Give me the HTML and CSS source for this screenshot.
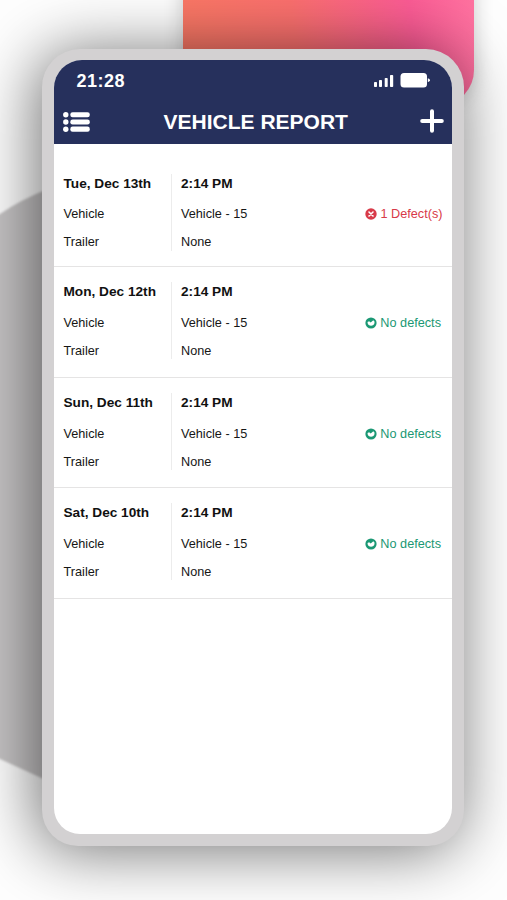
FILE: index.html
```html
<!DOCTYPE html>
<html lang="en">
<head>
<meta charset="utf-8">
<title>Vehicle Report</title>
<link rel="stylesheet" href="styles.css">
</head>
<body>
<svg class="backdrop" viewBox="0 0 507 900" aria-hidden="true">
  <defs>
    <linearGradient id="warm" x1="183" y1="45" x2="474" y2="0" gradientUnits="userSpaceOnUse">
      <stop offset="0" stop-color="#fb7865"/><stop offset=".38" stop-color="#fb706e"/><stop offset=".78" stop-color="#fc5c95"/><stop offset="1" stop-color="#ff72a0"/>
    </linearGradient>
    <filter id="soft"><feGaussianBlur stdDeviation="1.2"/></filter>
    <filter id="haze" x="-30%" y="-30%" width="160%" height="160%"><feGaussianBlur stdDeviation="10"/></filter>
  </defs>
  <rect x="183" y="-40" width="291" height="141" rx="30" fill="#000" opacity=".2" filter="url(#haze)"/>
  <path d="M-5 217 L0 214 Q20 200 50 188 V782 L0 759 L-5 756Z" fill="#c6c4c5" filter="url(#soft)"/>
  <path d="M183 0H474V70Q474 84 464 95L440 104H183Z" fill="url(#warm)"/>
</svg>
<main class="phone">
  <div class="screen">
    <header class="header">
      <div class="status">
        <span class="clock">21:28</span>
        <svg class="signals" viewBox="0 0 56 16" width="56" height="16" fill="#fff" aria-hidden="true">
          <rect x="0" y="10" width="3" height="5" rx=".8"/><rect x="5" y="8" width="3" height="7" rx=".8"/><rect x="10.7" y="6" width="3" height="9" rx=".8"/><rect x="16" y="3" width="3.2" height="12" rx=".8"/>
          <rect x="26.5" y="1" width="26.5" height="14.5" rx="3.5"/><path d="M53.8 6.3Q56 7 56 8.2T53.8 10.2Z"/>
        </svg>
      </div>
      <div class="titlebar">
        <svg class="menu" viewBox="0 0 27 20" width="27" height="20" fill="#fff" aria-hidden="true">
          <circle cx="2.8" cy="2.8" r="2.7"/><circle cx="2.8" cy="10" r="2.7"/><circle cx="2.8" cy="17.2" r="2.7"/>
          <rect x="7.3" y=".2" width="19.5" height="5.1" rx="2.3"/><rect x="7.3" y="7.4" width="19.5" height="5.1" rx="2.3"/><rect x="7.3" y="14.6" width="19.5" height="5.1" rx="2.3"/>
        </svg>
        <h1 class="title">VEHICLE REPORT</h1>
        <svg class="add" viewBox="0 0 24 24" width="24" height="24" aria-hidden="true"><path d="M12 2.2V21.8M2.2 12H21.8" stroke="#fff" stroke-width="4" stroke-linecap="round"/></svg>
      </div>
    </header>
    <section class="report first">
      <div class="labels"><strong class="date">Tue, Dec 13th</strong><span>Vehicle</span><span>Trailer</span></div>
      <div class="values"><strong class="time">2:14 PM</strong><span>Vehicle - 15</span><span>None</span></div>
      <div class="result bad"><svg viewBox="0 0 12 12" width="12" height="12" aria-hidden="true"><circle cx="6" cy="6" r="5.7" fill="currentColor"/><path d="M4 4L8 8M8 4L4 8" stroke="#fff" stroke-width="1.6" stroke-linecap="round"/></svg><span>1 Defect(s)</span></div>
    </section>
    <section class="report">
      <div class="labels"><strong class="date">Mon, Dec 12th</strong><span>Vehicle</span><span>Trailer</span></div>
      <div class="values"><strong class="time">2:14 PM</strong><span>Vehicle - 15</span><span>None</span></div>
      <div class="result"><svg viewBox="0 0 12 12" width="12" height="12" aria-hidden="true"><circle cx="6" cy="6" r="5.6" fill="currentColor"/><path d="M2.5 5L4.1 4.2L5.7 5.5L8.3 3.3L9.6 4.8Q9.6 7.2 8.3 8.1Q6 9.6 3.7 8Q2.5 7 2.5 5Z" fill="#fff"/></svg><span>No defects</span></div>
    </section>
    <section class="report">
      <div class="labels"><strong class="date">Sun, Dec 11th</strong><span>Vehicle</span><span>Trailer</span></div>
      <div class="values"><strong class="time">2:14 PM</strong><span>Vehicle - 15</span><span>None</span></div>
      <div class="result"><svg viewBox="0 0 12 12" width="12" height="12" aria-hidden="true"><circle cx="6" cy="6" r="5.6" fill="currentColor"/><path d="M2.5 5L4.1 4.2L5.7 5.5L8.3 3.3L9.6 4.8Q9.6 7.2 8.3 8.1Q6 9.6 3.7 8Q2.5 7 2.5 5Z" fill="#fff"/></svg><span>No defects</span></div>
    </section>
    <section class="report">
      <div class="labels"><strong class="date">Sat, Dec 10th</strong><span>Vehicle</span><span>Trailer</span></div>
      <div class="values"><strong class="time">2:14 PM</strong><span>Vehicle - 15</span><span>None</span></div>
      <div class="result"><svg viewBox="0 0 12 12" width="12" height="12" aria-hidden="true"><circle cx="6" cy="6" r="5.6" fill="currentColor"/><path d="M2.5 5L4.1 4.2L5.7 5.5L8.3 3.3L9.6 4.8Q9.6 7.2 8.3 8.1Q6 9.6 3.7 8Q2.5 7 2.5 5Z" fill="#fff"/></svg><span>No defects</span></div>
    </section>
  </div>
</main>
</body>
</html>
```
FILE: styles.css
```css
* { box-sizing: border-box; }
body {
  margin: 0;
  width: 507px;
  height: 900px;
  overflow: hidden;
  padding: 49px 43px 54px 42px;
  background: #fefefe;
  font-family: "Liberation Sans", Arial, sans-serif;
  color: #161616;
}
.backdrop { position: absolute; inset: 0; width: 507px; height: 900px; }
.phone {
  position: relative;
  height: 797px;
  padding: 11px 12px 12px 11.5px;
  border-radius: 38px 38px 36px 36px;
  background: #d3d1d2;
  box-shadow: -5px 4px 64px 1px rgba(0, 0, 0, .55);
}
.screen {
  height: 774px;
  border-radius: 28px 28px 26px 26px;
  overflow: hidden;
  background: #fff;
}
.header { height: 84px; background: #26305c; color: #fff; }
.status {
  height: 42px;
  padding: 1px 22px 0 23px;
  display: flex;
  align-items: center;
  justify-content: space-between;
}
.clock { font-size: 18px; font-weight: 700; letter-spacing: .5px; }
.signals { margin-top: -3px; }
.titlebar {
  height: 40px;
  padding: 0 8px 0 9.5px;
  display: flex;
  align-items: center;
  justify-content: space-between;
}
.title { margin: 0 0 0 1.5px; font-size: 21px; line-height: 24px; font-weight: 700; }
.add { margin-top: -2px; }
.report {
  height: 110.5px;
  padding: 15px 11px 0 10px;
  display: grid;
  grid-template-columns: 107px 1fr auto;
  border-bottom: 1px solid #e5e4e4;
  font-size: 12.7px;
}
.report.first { height: 123px; padding-top: 29.5px; }
.first .date, .first .time { margin-bottom: 6px; }
.first .result { margin-top: 26px; margin-right: -1.5px; }
.labels, .values { display: flex; flex-direction: column; height: 77px; }
.labels span, .values span { height: 28px; line-height: 28px; }
.date, .time { height: 20px; line-height: 20px; margin-bottom: 7px; font-size: 13.65px; color: #111; }
.values { border-left: 1px solid #ececec; padding-left: 9.5px; }
.result {
  height: 28px;
  margin-top: 27px;
  display: flex;
  align-items: center;
  gap: 3px;
  color: #1b9874;
}
.bad { color: #d83a49; }
```
